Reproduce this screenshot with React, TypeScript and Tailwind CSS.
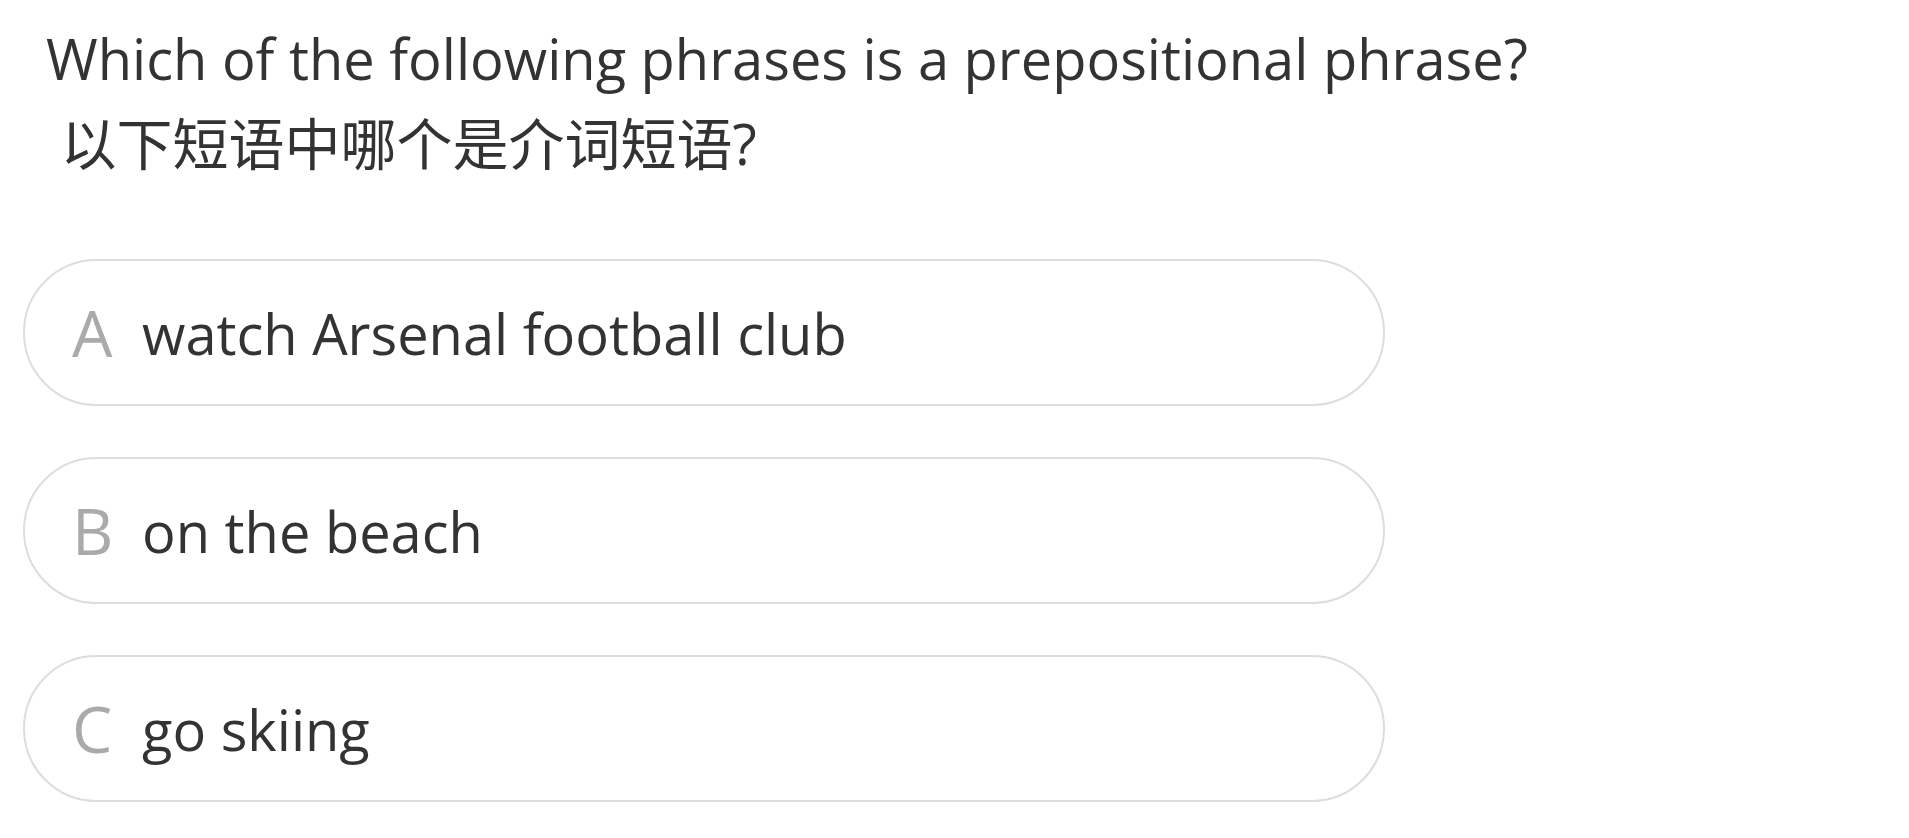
const options = [
  { key: "A", text: "watch Arsenal football club" },
  { key: "B", text: "on the beach" },
  { key: "C", text: "go skiing" },
];

function App() {
  return (
    <div
      className="min-h-screen bg-white px-[23px] pt-[16px] text-[#333333]"
      style={{ fontFamily: '"Open Sans", "Noto Sans CJK SC", sans-serif' }}
    >
      <div className="pl-[23px] text-[56px] leading-[85px]">
        <div>Which of the following phrases is a prepositional phrase?</div>
        <div className="whitespace-pre"> 以下短语中哪个是介词短语?</div>
      </div>
      <div className="mt-[73px] flex w-[1362px] flex-col gap-[51px]">
        {options.map((opt) => (
          <div
            key={opt.key}
            className="flex h-[147px] items-center rounded-full border-2 border-[#dddddd] pl-[47px]"
          >
            <span className="w-[70px] text-[64px] text-[#aaaaaa]">{opt.key}</span>
            <span className="text-[56px]">{opt.text}</span>
          </div>
        ))}
      </div>
    </div>
  );
}

export default App;
